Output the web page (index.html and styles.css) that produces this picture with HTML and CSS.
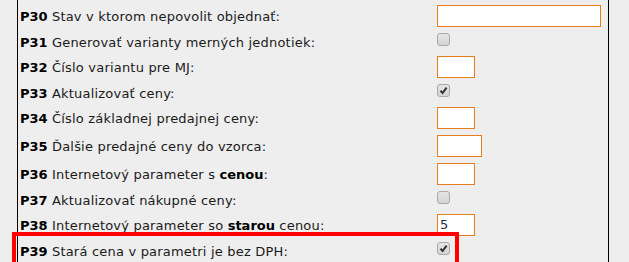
FILE: index.html
```html
<!DOCTYPE html>
<html lang="sk">
<head>
<meta charset="utf-8">
<link rel="stylesheet" href="styles.css">
</head>
<body>
<div class="panel">
  <div class="row row-in"><div class="label"><b>P30</b> Stav v ktorom nepovolit objednať:</div><div class="ctrl"><span class="inp inp-wide"></span></div></div>
  <div class="row row-cb"><div class="label"><b>P31</b> Generovať varianty merných jednotiek:</div><div class="ctrl"><span class="cb"></span></div></div>
  <div class="row row-in"><div class="label"><b>P32</b> Číslo variantu pre MJ:</div><div class="ctrl"><span class="inp inp-s"></span></div></div>
  <div class="row row-cb"><div class="label"><b>P33</b> Aktualizovať ceny:</div><div class="ctrl"><span class="cb"><svg viewBox="0 0 13 13" width="13" height="13"><path d="M3.5 6.8 L5.6 9 L9.6 3.6" fill="none" stroke="#333" stroke-width="2"/></svg></span></div></div>
  <div class="row row-in"><div class="label"><b>P34</b> Číslo základnej predajnej ceny:</div><div class="ctrl"><span class="inp inp-s"></span></div></div>
  <div class="row row-in"><div class="label"><b>P35</b> Ďalšie predajné ceny do vzorca:</div><div class="ctrl"><span class="inp inp-m"></span></div></div>
  <div class="row row-in"><div class="label"><b>P36</b> Internetový parameter s <b>cenou</b>:</div><div class="ctrl"><span class="inp inp-s"></span></div></div>
  <div class="row row-cb"><div class="label"><b>P37</b> Aktualizovať nákupné ceny:</div><div class="ctrl"><span class="cb"></span></div></div>
  <div class="row row-in"><div class="label"><b>P38</b> Internetový parameter so <b>starou</b> cenou:</div><div class="ctrl"><span class="inp inp-s">5</span></div></div>
  <div class="row row-cb"><div class="label"><b>P39</b> Stará cena v parametri je bez DPH:</div><div class="ctrl"><span class="cb"><svg viewBox="0 0 13 13" width="13" height="13"><path d="M3.5 6.8 L5.6 9 L9.6 3.6" fill="none" stroke="#333" stroke-width="2"/></svg></span></div></div>
</div>
<div class="highlight"></div>
</body>
</html>
```
FILE: styles.css
```css
html, body {
  margin: 0;
  padding: 0;
  background: #eeeeee;
}
body {
  font-family: "DejaVu Sans", Verdana, sans-serif;
  font-size: 13px;
  letter-spacing: 0.2px;
  color: #1a1a1a;
  overflow: hidden;
  height: 262px;
  position: relative;
}
.panel {
  margin-left: 17px;
  width: 590px;
  border-left: 1px solid #000;
  border-right: 1px solid #000;
  padding-top: 2px;
  height: 300px;
}
.row {
  display: flex;
  align-items: center;
  padding-left: 2px;
}
.row-in { height: 28px; }
.row-cb { height: 23px; }
.label {
  width: 417px;
  white-space: nowrap;
  padding-top: 1px;
}
.label b { color: #000; letter-spacing: 0; }
.ctrl {
  display: flex;
  align-items: center;
}
.inp {
  display: block;
  box-sizing: border-box;
  height: 22px;
  background: #fff;
  border: 1px solid #e87d1e;
  font-family: "DejaVu Sans", Verdana, sans-serif;
  font-size: 13px;
  letter-spacing: 0;
  line-height: 20px;
  padding-left: 2px;
  color: #1b2a4a;
}
.inp-wide { width: 164px; }
.inp-s { width: 38px; }
.inp-m { width: 45px; }
.cb {
  display: block;
  box-sizing: border-box;
  width: 13px;
  height: 13px;
  border: 1px solid #a9a9a9;
  border-radius: 3px;
  background: linear-gradient(#e6e6e6, #d4d4d4);
  position: relative;
  top: -2px;
}
.cb svg {
  position: absolute;
  left: -1px;
  top: -1px;
}
.highlight {
  position: absolute;
  left: 12px;
  top: 232px;
  width: 447px;
  height: 36px;
  box-sizing: border-box;
  border: 4px solid #ff0000;
}
```
